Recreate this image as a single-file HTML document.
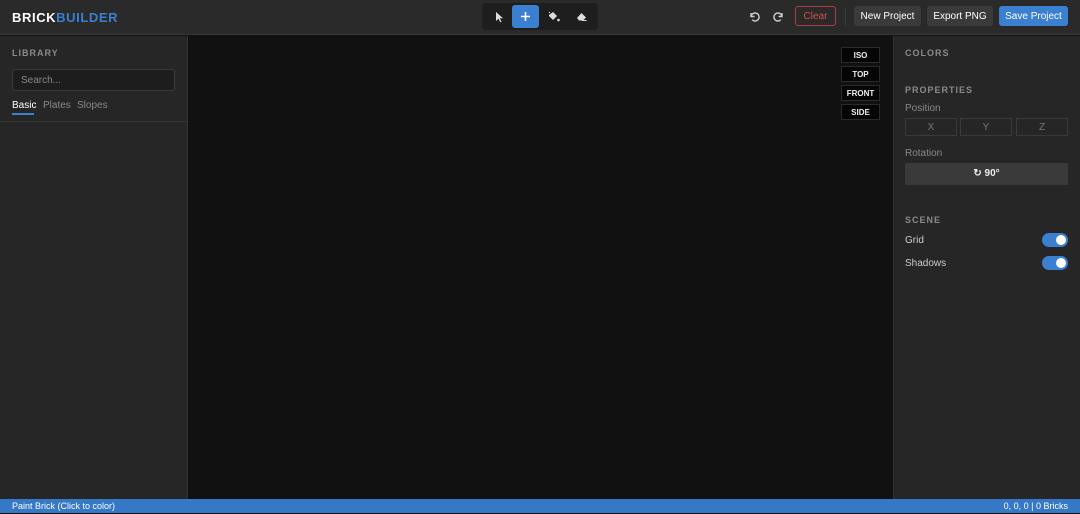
<!DOCTYPE html><html><head><style>
*{box-sizing:border-box;margin:0;padding:0}
body{width:1080px;height:513px;overflow:hidden;background:#111;font-family:"Liberation Sans",sans-serif;color:#ddd;position:relative}
.hdr{position:absolute;left:0;top:0;width:1080px;height:35px;background:#2a2a2a;border-bottom:1px solid #383838}
.logo{position:absolute;left:12px;top:10px;font-weight:bold;font-size:13px;letter-spacing:.6px;color:#fff}
.logo span{color:#3a7fd0}
.tools{position:absolute;left:482px;top:3px;width:116px;height:27px;background:#1e1e1e;border-radius:4px}
.tb{position:absolute;top:2px;width:27px;height:23px;border-radius:3px}
.btn{position:absolute;top:6px;height:20px;border-radius:3px;background:#3a3a3a;color:#fff;font-size:10px;display:flex;align-items:center;justify-content:center}
.left{position:absolute;left:0;top:36px;width:188px;height:463px;background:#262626;border-right:1px solid #333}
.right{position:absolute;left:893px;top:36px;width:187px;height:463px;background:#262626;border-left:1px solid #333}
.h{font-size:9px;font-weight:bold;letter-spacing:1px;color:#8a8a8a;position:absolute}
.lbl{font-size:10px;color:#888;position:absolute}
.vw{position:absolute;left:841px;width:39px;height:16px;background:#050505;border:1px solid #2a2a2a;color:#eee;font-size:8px;font-weight:bold;display:flex;align-items:center;justify-content:center}
.ax{position:absolute;top:82px;width:52px;height:18px;border:1px solid #3a3a3a;color:#777;font-size:10px;display:flex;align-items:center;justify-content:center}
.tg{position:absolute;left:149px;width:26px;height:14px;border-radius:7px;background:#3a7fd0}
.tg:after{content:"";position:absolute;right:2px;top:2px;width:10px;height:10px;border-radius:50%;background:#fff}
.st{position:absolute;left:0;top:499px;width:1080px;height:14px;background:#3478c6;color:#fff;font-size:9px;line-height:15px}
</style></head><body>
<div class="hdr">
<div class="logo">BRICK<span>BUILDER</span></div>
<div class="tools">
<div class="tb" style="left:3px"><svg width="27" height="23"><path d="M11 7v9l2.5-2.3 1.7 3.6 1.3-.6-1.7-3.5H18z" fill="#ddd"/></svg></div>
<div class="tb" style="left:30px;background:#3a7fd0"><svg width="27" height="23"><path d="M13.5 7v9M9 11.5h9" stroke="#fff" stroke-width="1.6"/></svg></div>
<div class="tb" style="left:58px"><svg width="27" height="23"><path d="M9 10l4-3 4 4-4 4-4-4z" fill="#ddd"/><path d="M10 8l-1-1" stroke="#ddd"/><circle cx="18.5" cy="15" r="1.3" fill="#ddd"/></svg></div>
<div class="tb" style="left:86px"><svg width="27" height="23"><path d="M9 13l4.5-5 4.5 4.5-3 3H11z" fill="#ddd"/><path d="M14 15.5h4.5" stroke="#ddd"/></svg></div>
</div>
<svg style="position:absolute;left:747px;top:9px" width="14" height="14"><path d="M4 4v3.5h3.5M4.2 7a4 4 0 1 1 1 3.8" fill="none" stroke="#ccc" stroke-width="1.4"/></svg>
<svg style="position:absolute;left:772px;top:9px" width="14" height="14"><path d="M10 4v3.5H6.5M9.8 7a4 4 0 1 0-1 3.8" fill="none" stroke="#ccc" stroke-width="1.4"/></svg>
<div class="btn" style="left:795px;width:41px;background:transparent;border:1px solid #a84040;color:#d05050">Clear</div>
<div style="position:absolute;left:845px;top:8px;width:1px;height:18px;background:#3a3a3a"></div>
<div class="btn" style="left:854px;width:67px">New Project</div>
<div class="btn" style="left:927px;width:66px">Export PNG</div>
<div class="btn" style="left:999px;width:69px;background:#3a7fd0">Save Project</div>
</div>
<div class="left">
<div class="h" style="left:12px;top:12px">LIBRARY</div>
<div style="position:absolute;left:12px;top:33px;width:163px;height:22px;background:#1d1d1d;border:1px solid #3a3a3a;border-radius:3px;font-size:10px;color:#888;padding:5px 8px">Search...</div>
<div style="position:absolute;left:12px;top:64px;font-size:10px;color:#fff">Basic</div>
<div style="position:absolute;left:12px;top:77px;width:22px;height:2px;background:#3a7fd0"></div>
<div style="position:absolute;left:43px;top:64px;font-size:10px;color:#888">Plates</div>
<div style="position:absolute;left:77px;top:64px;font-size:10px;color:#888">Slopes</div>
<div style="position:absolute;left:0;top:85px;width:187px;height:1px;background:#333"></div>
</div>
<div class="vw" style="top:47px">ISO</div>
<div class="vw" style="top:66px">TOP</div>
<div class="vw" style="top:85px">FRONT</div>
<div class="vw" style="top:104px">SIDE</div>
<div class="right">
<div class="h" style="left:11px;top:12px">COLORS</div>
<div class="h" style="left:11px;top:49px">PROPERTIES</div>
<div class="lbl" style="left:11px;top:67px">Position</div>
<div class="ax" style="left:11px">X</div><div class="ax" style="left:66px">Y</div><div class="ax" style="left:122px">Z</div>
<div class="lbl" style="left:11px;top:112px">Rotation</div>
<div style="position:absolute;left:11px;top:127px;width:163px;height:22px;background:#3a3a3a;border-radius:2px;color:#eee;font-size:10px;text-align:center;line-height:22px;font-weight:bold">↻ 90°</div>
<div class="h" style="left:11px;top:179px">SCENE</div>
<div class="lbl" style="left:11px;top:199px;color:#ccc">Grid</div><div class="tg" style="top:197px;left:148px"></div>
<div class="lbl" style="left:11px;top:222px;color:#ccc">Shadows</div><div class="tg" style="top:220px;left:148px"></div>
</div>
<div class="st"><span style="position:absolute;left:12px">Paint Brick (Click to color)</span><span style="position:absolute;right:12px">0, 0, 0 | 0 Bricks</span></div>
</body></html>
